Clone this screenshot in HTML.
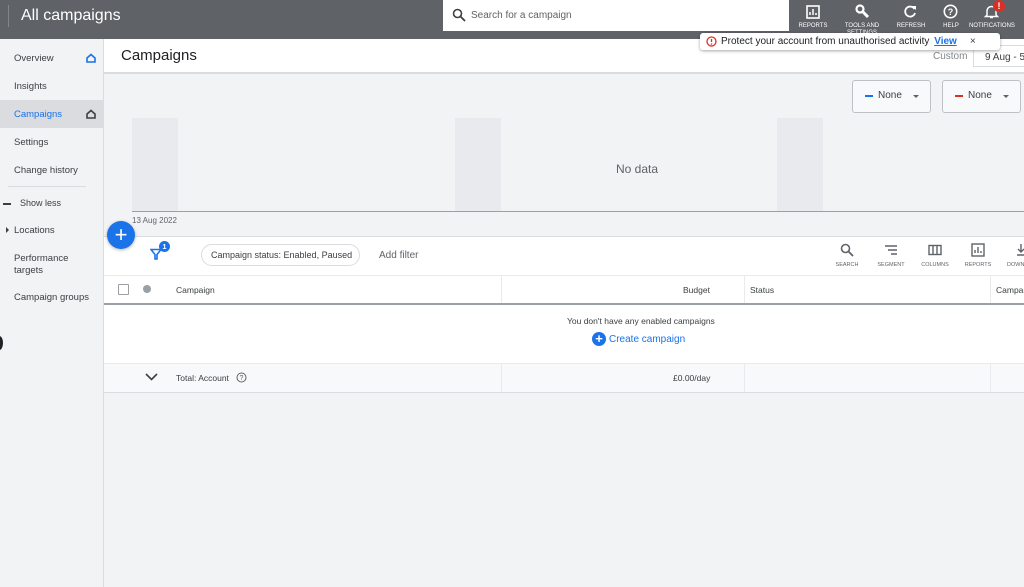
<!DOCTYPE html>
<html><head><meta charset="utf-8"><style>
*{box-sizing:border-box;margin:0;padding:0}
body{width:1024px;height:587px;overflow:hidden;background:#f1f3f4;font-family:"Liberation Sans",Arial,sans-serif;position:relative;color:#3c4043}
.a{position:absolute}
.hdr{left:0;top:0;width:1024px;height:39px;background:#5f6368}
.nav{font-size:9.5px;color:#3c4043;left:14px}
.ti{font-size:6px;color:#fff;text-align:center;width:50px}
.tb{font-size:5.5px;color:#5f6368;text-align:center;width:44px}
</style></head><body>
<div class="a hdr"></div>
<div class="a" style="left:8px;top:5px;width:1px;height:22px;background:#80868b"></div>
<div class="a" style="left:21px;top:7px;font-size:16px;color:#fff">All campaigns</div>
<div class="a" style="left:443px;top:0;width:346px;height:31px;background:#fff"></div>
<svg class="a" style="left:452px;top:8px" width="14" height="14" viewBox="0 0 14 14"><circle cx="5.5" cy="5.5" r="4" fill="none" stroke="#3c4043" stroke-width="1.6"/><path d="M8.5 8.5L13 13" stroke="#3c4043" stroke-width="1.8"/></svg>
<div class="a" style="left:471px;top:10px;font-size:10px;color:#5f6368">Search for a campaign</div>
<!-- header icons -->
<svg class="a" style="left:806px;top:5px" width="14" height="14"><rect x="1" y="1" width="12" height="12" fill="none" stroke="#fff" stroke-width="1.6"/><path d="M4 10V7M7 10V4M10 10V8" stroke="#fff" stroke-width="1.5"/></svg>
<div class="a ti" style="left:788px;top:23px">REPORTS</div>
<svg class="a" style="left:855px;top:4px" width="15" height="15"><circle cx="5" cy="5" r="3.5" fill="none" stroke="#fff" stroke-width="2.2"/><path d="M7 7L13 13" stroke="#fff" stroke-width="3"/></svg>
<div class="a ti" style="left:837px;top:23px">TOOLS AND</div>
<div class="a ti" style="left:837px;top:30px">SETTINGS</div>
<svg class="a" style="left:903px;top:4px" width="15" height="15"><path d="M11.5 5A5 5 0 1 0 12 9" fill="none" stroke="#fff" stroke-width="1.8"/><path d="M9 2h4v4z" fill="#fff"/></svg>
<div class="a ti" style="left:886px;top:23px">REFRESH</div>
<svg class="a" style="left:943px;top:4px" width="15" height="15"><circle cx="7.5" cy="7.5" r="6.2" fill="none" stroke="#fff" stroke-width="1.6"/><text x="7.5" y="11" font-size="9" font-weight="bold" fill="#fff" text-anchor="middle" font-family="Liberation Sans">?</text></svg>
<div class="a ti" style="left:926px;top:23px">HELP</div>
<svg class="a" style="left:984px;top:4px" width="15" height="15"><path d="M3 11V7a4.5 4.5 0 0 1 9 0v4l1.5 1.5h-12z" fill="none" stroke="#fff" stroke-width="1.5"/><path d="M6 13.5h3" stroke="#fff" stroke-width="1.5"/></svg>
<div class="a" style="left:993px;top:0;width:12px;height:12px;border-radius:50%;background:#d93025;color:#fff;font-size:9px;font-weight:bold;text-align:center;line-height:12px">!</div>
<div class="a ti" style="left:967px;top:23px;width:50px">NOTIFICATIONS</div>
<!-- sidebar -->
<div class="a" style="left:0;top:39px;width:104px;height:548px;background:#f1f3f4;border-right:1px solid #dadce0"></div>
<div class="a nav" style="top:53px">Overview</div>
<svg class="a" style="left:86px;top:53px" width="10" height="10"><path d="M1 5L5 1.5 9 5V9H1z" fill="none" stroke="#1a73e8" stroke-width="1.6"/></svg>
<div class="a nav" style="top:81px">Insights</div>
<div class="a" style="left:0;top:100px;width:103px;height:28px;background:#dadce0"></div>
<div class="a nav" style="top:109px;color:#1a73e8">Campaigns</div>
<svg class="a" style="left:86px;top:109px" width="10" height="10"><path d="M1 5L5 1.5 9 5V9H1z" fill="none" stroke="#3c4043" stroke-width="1.6"/></svg>
<div class="a nav" style="top:137px">Settings</div>
<div class="a nav" style="top:165px">Change history</div>
<div class="a" style="left:8px;top:186px;width:78px;height:1px;background:#dadce0"></div>
<div class="a" style="left:3px;top:203px;width:8px;height:1.5px;background:#3c4043"></div>
<div class="a" style="left:20px;top:198px;font-size:9px;color:#3c4043">Show less</div>
<div class="a" style="left:6px;top:227px;width:0;height:0;border-left:3px solid #3c4043;border-top:3px solid transparent;border-bottom:3px solid transparent"></div>
<div class="a nav" style="top:225px">Locations</div>
<div class="a nav" style="top:253px;line-height:12px">Performance<br>targets</div>
<div class="a nav" style="top:292px">Campaign groups</div>
<div class="a" style="left:-4px;top:336px;width:7px;height:14px;border-radius:50%;background:#202124"></div>
<!-- title bar -->
<div class="a" style="left:104px;top:39px;width:920px;height:35px;background:#fff;border-bottom:2px solid #dadce0"></div>
<div class="a" style="left:121px;top:47px;font-size:15px;color:#202124">Campaigns</div>
<div class="a" style="left:933px;top:51px;font-size:10px;color:#80868b">Custom</div>
<div class="a" style="left:973px;top:45px;width:60px;height:22px;border:1px solid #dadce0;background:#fff;font-size:10px;padding:6px 0 0 11px;color:#3c4043">9 Aug - 5</div>
<!-- notification toast -->
<div class="a" style="left:700px;top:33px;width:300px;height:17px;background:#fff;border-radius:3px;box-shadow:0 1px 3px rgba(0,0,0,.35)"></div>
<svg class="a" style="left:706px;top:36px" width="11" height="11"><circle cx="5.5" cy="5.5" r="4.5" fill="none" stroke="#d93025" stroke-width="1.3"/><path d="M5.5 3v3" stroke="#d93025" stroke-width="1.3"/><circle cx="5.5" cy="8" r=".8" fill="#d93025"/></svg>
<div class="a" style="left:721px;top:36px;font-size:10px;color:#202124;white-space:nowrap">Protect your account from unauthorised activity <span style="color:#1a73e8;text-decoration:underline;font-weight:bold;margin-left:2px">View</span><span style="margin-left:13px;color:#3c4043">×</span></div>
<!-- chart -->
<div class="a" style="left:852px;top:80px;width:79px;height:33px;border:1px solid #bdc1c6;border-radius:3px;background:#f8f9fa"></div>
<div class="a" style="left:865px;top:95px;width:8px;height:2px;background:#1a73e8"></div>
<div class="a" style="left:878px;top:90px;font-size:10px;color:#3c4043">None</div>
<div class="a" style="left:913px;top:95px;border-left:3.5px solid transparent;border-right:3.5px solid transparent;border-top:3.5px solid #5f6368"></div>
<div class="a" style="left:942px;top:80px;width:79px;height:33px;border:1px solid #bdc1c6;border-radius:3px;background:#f8f9fa"></div>
<div class="a" style="left:955px;top:95px;width:8px;height:2px;background:#d93025"></div>
<div class="a" style="left:968px;top:90px;font-size:10px;color:#3c4043">None</div>
<div class="a" style="left:1003px;top:95px;border-left:3.5px solid transparent;border-right:3.5px solid transparent;border-top:3.5px solid #5f6368"></div>
<div class="a" style="left:132px;top:118px;width:46px;height:93px;background:#e8eaed"></div>
<div class="a" style="left:455px;top:118px;width:46px;height:93px;background:#e8eaed"></div>
<div class="a" style="left:777px;top:118px;width:46px;height:93px;background:#e8eaed"></div>
<div class="a" style="left:132px;top:211px;width:892px;height:1px;background:#9aa0a6"></div>
<div class="a" style="left:616px;top:162px;font-size:12px;color:#5f6368">No data</div>
<div class="a" style="left:132px;top:216px;font-size:8px;color:#5f6368">13 Aug 2022</div>
<!-- table -->
<div class="a" style="left:104px;top:236px;width:920px;height:157px;background:#fff;border-top:1px solid #dadce0;border-bottom:1px solid #dadce0"></div>
<div class="a" style="left:107px;top:221px;width:28px;height:28px;border-radius:50%;background:#1a73e8;box-shadow:0 1px 3px rgba(0,0,0,.3);color:#fff;font-size:22px;text-align:center;line-height:27px">+</div>
<svg class="a" style="left:150px;top:248px" width="12" height="12"><path d="M1 1.5h10L7 6.5V11H5V6.5z" fill="none" stroke="#1a73e8" stroke-width="1.6"/></svg>
<div class="a" style="left:159px;top:241px;width:11px;height:11px;border-radius:50%;background:#1a73e8;color:#fff;font-size:7.5px;font-weight:bold;text-align:center;line-height:11px">1</div>
<div class="a" style="left:201px;top:244px;width:159px;height:22px;border:1px solid #dadce0;border-radius:11px;font-size:9px;color:#3c4043;padding:5px 0 0 9px">Campaign status: Enabled, Paused</div>
<div class="a" style="left:379px;top:250px;font-size:10px;color:#5f6368">Add filter</div>
<svg class="a" style="left:840px;top:243px" width="14" height="14"><circle cx="5.5" cy="5.5" r="4" fill="none" stroke="#5f6368" stroke-width="1.6"/><path d="M8.5 8.5L13 13" stroke="#5f6368" stroke-width="1.8"/></svg>
<div class="a tb" style="left:825px;top:262px">SEARCH</div>
<svg class="a" style="left:884px;top:244px" width="14" height="12"><path d="M1 2h12M4 6h9M7 10h6" stroke="#5f6368" stroke-width="1.4"/></svg>
<div class="a tb" style="left:869px;top:262px">SEGMENT</div>
<svg class="a" style="left:928px;top:244px" width="14" height="12"><rect x="1" y="1.5" width="12" height="9" fill="none" stroke="#5f6368" stroke-width="1.4"/><path d="M5 2v8M9 2v8" stroke="#5f6368" stroke-width="1.4"/></svg>
<div class="a tb" style="left:913px;top:262px">COLUMNS</div>
<svg class="a" style="left:971px;top:243px" width="14" height="14"><rect x="1" y="1" width="12" height="12" fill="none" stroke="#5f6368" stroke-width="1.4"/><path d="M4 10V7M7 10V4M10 10V8" stroke="#5f6368" stroke-width="1.4"/></svg>
<div class="a tb" style="left:956px;top:262px">REPORTS</div>
<svg class="a" style="left:1016px;top:243px" width="10" height="14"><path d="M5 1v8M2 6l3 3 3-3M1 12h8" fill="none" stroke="#5f6368" stroke-width="1.4"/></svg>
<div class="a tb" style="left:1000px;top:262px;text-align:left;width:40px;padding-left:7px">DOWN</div>
<div class="a" style="left:104px;top:275px;width:920px;height:1px;background:#e8eaed"></div>
<div class="a" style="left:104px;top:303px;width:920px;height:2px;background:#9aa0a6"></div>
<div class="a" style="left:118px;top:284px;width:11px;height:11px;border:1px solid #9aa0a6;border-radius:1px"></div>
<div class="a" style="left:143px;top:285px;width:8px;height:8px;border-radius:50%;background:#9aa0a6"></div>
<div class="a" style="left:176px;top:285px;font-size:8.5px;color:#3c4043">Campaign</div>
<div class="a" style="left:501px;top:276px;width:1px;height:27px;background:#e8eaed"></div>
<div class="a" style="left:683px;top:285px;font-size:8.5px;color:#3c4043">Budget</div>
<div class="a" style="left:744px;top:276px;width:1px;height:27px;background:#e8eaed"></div>
<div class="a" style="left:750px;top:285px;font-size:8.5px;color:#3c4043">Status</div>
<div class="a" style="left:990px;top:276px;width:1px;height:27px;background:#e8eaed"></div>
<div class="a" style="left:996px;top:285px;font-size:8.5px;color:#3c4043">Campai</div>
<div class="a" style="left:567px;top:316px;font-size:8.5px;color:#3c4043">You don't have any enabled campaigns</div>
<div class="a" style="left:592px;top:332px;width:14px;height:14px;border-radius:50%;background:#1a73e8;color:#fff;font-size:13px;font-weight:bold;text-align:center;line-height:14px">+</div>
<div class="a" style="left:609px;top:334px;font-size:10px;color:#1a73e8">Create campaign</div>
<div class="a" style="left:104px;top:363px;width:920px;height:29px;background:#f8f9fa;border-top:1px solid #e8eaed"></div>
<svg class="a" style="left:145px;top:373px" width="13" height="8"><path d="M1 1l5.5 5.5L12 1" fill="none" stroke="#3c4043" stroke-width="1.6"/></svg>
<div class="a" style="left:176px;top:373px;font-size:8.5px;color:#3c4043">Total: Account</div>
<svg class="a" style="left:236px;top:372px" width="11" height="11"><circle cx="5.5" cy="5.5" r="4.5" fill="none" stroke="#5f6368" stroke-width="1"/><text x="5.5" y="8.2" font-size="7" fill="#5f6368" text-anchor="middle" font-family="Liberation Sans">?</text></svg>
<div class="a" style="left:501px;top:364px;width:1px;height:28px;background:#e8eaed"></div>
<div class="a" style="left:673px;top:373px;font-size:8.5px;color:#3c4043">£0.00/day</div>
<div class="a" style="left:744px;top:364px;width:1px;height:28px;background:#e8eaed"></div>
<div class="a" style="left:990px;top:364px;width:1px;height:28px;background:#e8eaed"></div>
</body></html>
